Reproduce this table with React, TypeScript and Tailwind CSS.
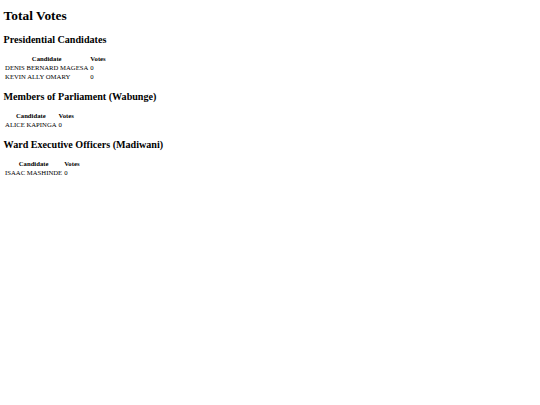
import React from "react";

const sections = [
  { title: "Presidential Candidates", rows: [["DENIS BERNARD MAGESA", "0"], ["KEVIN ALLY OMARY", "0"]] },
  { title: "Members of Parliament (Wabunge)", rows: [["ALICE KAPINGA", "0"]] },
  { title: "Ward Executive Officers (Madiwani)", rows: [["ISAAC MASHINDE", "0"]] },
];

export default function App() {
  return (
    <div className="min-h-[405px] w-[540px] bg-white text-black px-[3.6px] py-[0.1px] font-['Liberation_Serif',serif]">
      <h1 className="text-[13.4px] leading-[1.15] font-bold mt-[8.2px] mb-[10.5px]">Total Votes</h1>
      {sections.map((s) => (
        <div key={s.title}>
          <h2 className="text-[10.1px] leading-[1.15] font-bold mt-[9.2px] mb-[7.9px]">{s.title}</h2>
          <table className="border-separate border-spacing-[1px] text-[6.7px] leading-[7px]">
            <thead>
              <tr>
                <th className="p-[0.5px] font-bold text-center">Candidate</th>
                <th className="p-[0.5px] font-bold text-center">Votes</th>
              </tr>
            </thead>
            <tbody>
              {s.rows.map((r) => (
                <tr key={r[0]}>
                  <td className="p-[0.5px] text-left">{r[0]}</td>
                  <td className="p-[0.5px] text-left">{r[1]}</td>
                </tr>
              ))}
            </tbody>
          </table>
        </div>
      ))}
    </div>
  );
}
